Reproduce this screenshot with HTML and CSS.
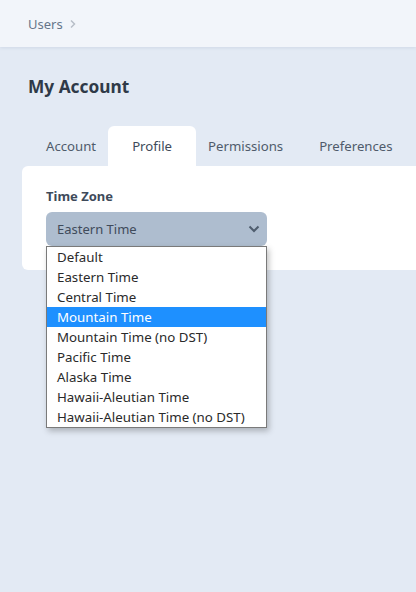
FILE: index.html
```html
<!DOCTYPE html>
<html>
<head>
<meta charset="utf-8">
<link rel="stylesheet" href="styles.css">
</head>
<body>
<header class="topbar">
  <span class="crumb">Users</span>
  <svg class="crumb-chev" width="8" height="10" viewBox="0 0 8 10"><path d="M2 1.5 L5.5 5 L2 8.5" fill="none" stroke="#b8bfc8" stroke-width="1.5"/></svg>
</header>
<main class="main">
  <h1 class="title">My Account</h1>
  <nav class="tabs">
    <div class="tab">Account</div>
    <div class="tab active">Profile</div>
    <div class="tab">Permissions</div>
    <div class="tab">Preferences</div>
  </nav>
  <section class="card">
    <div class="label">Time Zone</div>
    <div class="select-wrap">
      <div class="select">
        <span>Eastern Time</span>
        <svg width="12" height="8" viewBox="0 0 12 8"><path d="M1.5 1.5 L6 6 L10.5 1.5" fill="none" stroke="#4f5d6e" stroke-width="2"/></svg>
      </div>
      <ul class="options">
        <li>Default</li>
        <li>Eastern Time</li>
        <li>Central Time</li>
        <li class="hl">Mountain Time</li>
        <li>Mountain Time (no DST)</li>
        <li>Pacific Time</li>
        <li>Alaska Time</li>
        <li>Hawaii-Aleutian Time</li>
        <li>Hawaii-Aleutian Time (no DST)</li>
      </ul>
    </div>
  </section>
</main>
</body>
</html>
```
FILE: styles.css
```css
* { box-sizing: border-box; }
html, body { margin: 0; padding: 0; }
body {
  background: #e3eaf4;
  font-family: "Noto Sans", "Open Sans", sans-serif;
  width: 416px;
  height: 592px;
  overflow: hidden;
}
.topbar {
  height: 47px;
  background: #f2f5fa;
  display: flex;
  align-items: center;
  padding-left: 28px;
  gap: 6px;
  box-shadow: 0 1px 3px rgba(120, 140, 170, 0.18);
  position: relative;
}
.crumb {
  font-size: 13px;
  color: #66758a;
}
.crumb-chev { margin-top: 1px; }
.main {
  padding: 28px 0 0 22px;
}
.title {
  margin: 0 0 0 6px;
  font-size: 17.3px;
  font-weight: 700;
  color: #2f3a48;
  line-height: 24px;
}
.tabs {
  display: flex;
  margin-top: 27px;
  height: 40px;
}
.tab {
  position: relative;
  font-size: 13.2px;
  color: #4f5b6b;
  display: flex;
  align-items: center;
  height: 40px;
  padding: 0 24px;
  margin-right: -12px;
  white-space: nowrap;
}
.tab.active {
  z-index: 1;
  background: #ffffff;
  border-radius: 6px 6px 0 0;
  color: #3e4a5a;
}
.card {
  background: #ffffff;
  border-radius: 6px 0 0 6px;
  height: 104px;
  padding: 20px 0 0 24px;
}
.label {
  font-size: 13px;
  font-weight: 700;
  color: #3e4a5a;
  line-height: 20px;
}
.select-wrap {
  position: relative;
  width: 221px;
  margin-top: 6px;
}
.select {
  height: 34px;
  background: #aebdcf;
  border-radius: 6px;
  display: flex;
  align-items: center;
  justify-content: space-between;
  padding: 0 7px 0 11px;
  font-size: 13px;
  color: #3f4b5b;
}
.options {
  position: absolute;
  top: 34px;
  left: 0;
  width: 221px;
  margin: 0;
  padding: 0;
  list-style: none;
  background: #ffffff;
  border: 1px solid #7a7a7a;
  box-shadow: 2px 3px 6px rgba(0, 0, 0, 0.25);
}
.options li {
  height: 20px;
  line-height: 20px;
  padding-left: 10px;
  font-size: 13.3px;
  color: #2a2a2a;
}
.options li.hl {
  background: #1e90ff;
  color: #ffffff;
}
```
